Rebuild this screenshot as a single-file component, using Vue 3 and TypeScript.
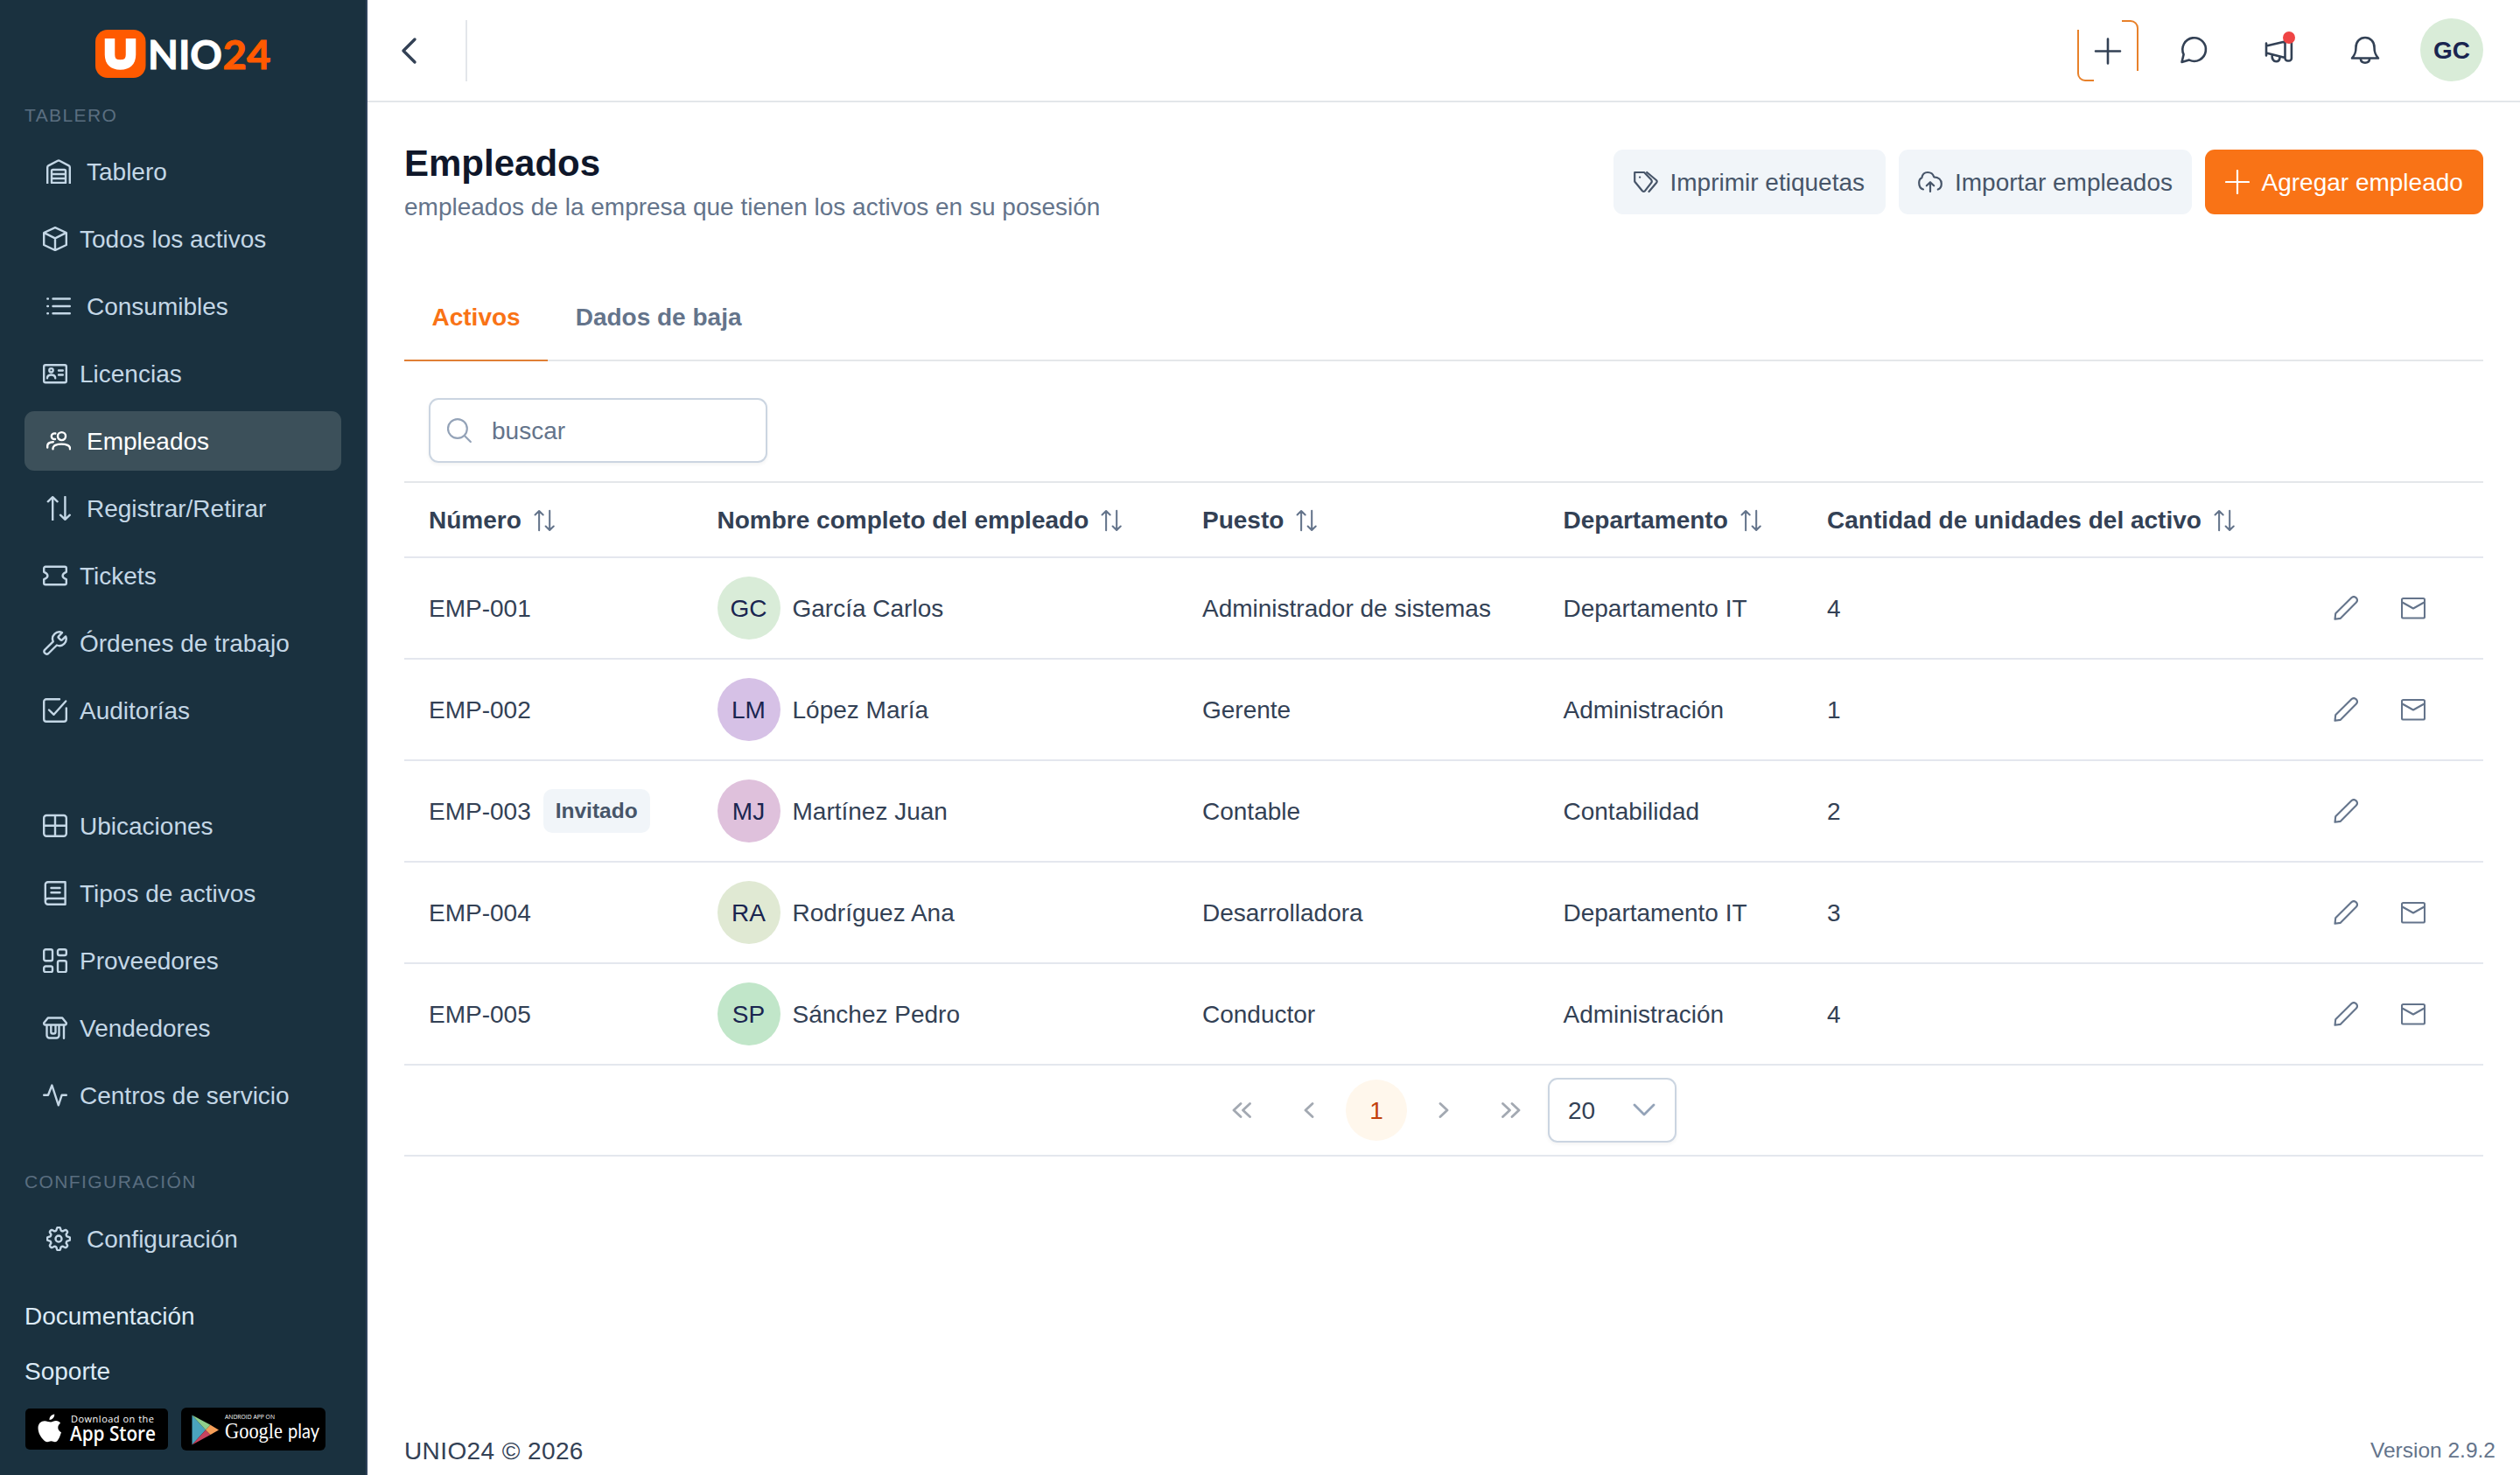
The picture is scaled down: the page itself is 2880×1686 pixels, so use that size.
<script setup lang="ts">
interface MenuItem {
  label: string
  icon: string
  wide?: boolean
  active?: boolean
}

interface Employee {
  code: string
  guest?: boolean
  initials: string
  color: string
  name: string
  role: string
  department: string
  units: number
  mail: boolean
}

// Outline of the settings cog: a circle whose radius swells eight times.
function cogPath(): string {
  const points: string[] = []
  for (let i = 0; i < 96; i++) {
    const a = (i / 96) * Math.PI * 2
    const wave = Math.tanh(2.2 * Math.cos(8 * a)) / Math.tanh(2.2)
    const r = 11.4 + 1.7 * wave
    points.push(`${(14 + r * Math.sin(a)).toFixed(2)} ${(14 - r * Math.cos(a)).toFixed(2)}`)
  }
  return `M${points.join('L')}ZM17.500 14a3.500 3.500 0 1 1-7 0a3.500 3.500 0 0 1 7 0Z`
}

const icons: Record<string, string> = {
  warehouse:
    'M1.2 27.5V9.2Q1.2 8 2.3 7.4L13 1.7Q14 1.2 15 1.7L25.7 7.4Q26.8 8 26.8 9.2V27.5M6 27V13.5a1.5 1.5 0 0 1 1.500-1.500H20.500a1.500 1.500 0 0 1 1.500 1.500V27ZM6 17H22M6 22H22',
  box: 'M14 1.200L26.800 7V21L14 27L1.200 21V7ZM1.500 7.200L14 13.300L26.500 7.200M14 13.300V27',
  list: 'M7.500 5.500H26.800M7.500 14H26.800M7.500 22.300H26.800M1.300 5.500h.6M1.300 14h.6M1.300 22.300h.6',
  idcard:
    'M3 4.200H25a1.800 1.800 0 0 1 1.800 1.800V22.500a1.800 1.800 0 0 1-1.800 1.800H3a1.800 1.800 0 0 1-1.800-1.800V6a1.800 1.800 0 0 1 1.800-1.800ZM11.700 10.300a2.200 2.200 0 1 1-4.400 0a2.200 2.200 0 0 1 4.400 0ZM5 19.200C5 16.500 7 15.500 9.500 15.500S14.200 16.500 14.200 19.200M18 10.500H22.800M18 15.500H22.800',
  users:
    'M22 8.600a4.500 4.500 0 1 1-9 0a4.500 4.500 0 0 1 9 0ZM7.500 23.300V22.300C7.500 19.600 11.500 17.600 17.200 17.600S27 19.600 27 22.300V23.300M10.300 5.500C7.500 5 5.800 6.700 5.800 8.700S7.500 12.300 10 12M1.200 21.500V19.800C1.200 17.200 3.500 15.300 7.800 15.200',
  arrows: 'M7.200 27.300V1.200M1.800 6.300L7.200 1.200L12.600 6.300M21.400 1V26.800M16 21.700L21.400 26.800L26.800 21.700',
  ticket:
    'M1.200 9.800V5.600a1.800 1.800 0 0 1 1.800-1.800H25a1.800 1.800 0 0 1 1.800 1.800V9.800C23.600 11 22.600 12.300 22.600 14S23.600 17 26.800 18.200V22.400a1.800 1.800 0 0 1-1.800 1.800H3a1.800 1.800 0 0 1-1.800-1.800V18.200C4.400 17 5.400 15.700 5.400 14S4.400 11 1.200 9.800Z',
  wrench:
    'M18 6.300a1.400 1.400 0 0 0 0 1.900l2.200 2.200a1.400 1.400 0 0 0 1.900 0l4-4a7.800 7.800 0 0 1-10.200 10.100L6.300 26a3 3 0 0 1-4.200-4.200L11.700 12.300A7.800 7.800 0 0 1 22 2.100Z',
  check:
    'M19 1.200H4a2.800 2.800 0 0 0-2.800 2.800V24a2.800 2.800 0 0 0 2.800 2.800H24a2.800 2.800 0 0 0 2.800-2.800V11.500M7 13.500L12.500 18.800L26.200 3.500',
  grid: 'M4.200 2H23.800a3 3 0 0 1 3 3V22.800a3 3 0 0 1-3 3H4.200a3 3 0 0 1-3-3V5a3 3 0 0 1 3-3ZM14 2V25.800M1.200 13.800H26.800',
  book: 'M25.600 1.200V26.800H5.800a3 3 0 0 1-3-3V4.200a3 3 0 0 1 3-3ZM2.800 23.500C2.800 21.500 4 20 6 20H25.600M9.500 8H19.500M9.500 13.200H19.500',
  tiles:
    'M3.200 1.200H9a2 2 0 0 1 2 2V12.300a2 2 0 0 1-2 2H3.200a2 2 0 0 1-2-2V3.200a2 2 0 0 1 2-2ZM19 1.200H24.800a2 2 0 0 1 2 2V6a2 2 0 0 1-2 2H19a2 2 0 0 1-2-2V3.200a2 2 0 0 1 2-2ZM3.200 20.500H9a2 2 0 0 1 2 2V25.200a2 2 0 0 1-2 2H3.200a2 2 0 0 1-2-2V22.500a2 2 0 0 1 2-2ZM19 14.200H24.800a2 2 0 0 1 2 2V25.200a2 2 0 0 1-2 2H19a2 2 0 0 1-2-2V16.200a2 2 0 0 1 2-2Z',
  shop: 'M5.800 2.500H22.200L26.800 8.300Q27 10.500 25 10.500H3Q1 10.500 1.200 8.300ZM4.500 10.500V22.500a3 3 0 0 0 3 3H15.500a3 3 0 0 0 3-3V10.500M24 10.500V25.800M9.300 11V18.500a2 2 0 0 0 2 2H12.500a2 2 0 0 0 2-2V11',
  activity: 'M1.200 13.800H6L10.400 2.500L17.800 25.300L21.600 13.800H26.800',
  cog: cogPath(),
  tag: 'M1.200 3H12L20.200 11.600Q21.400 13.200 20.200 14.800L13 24.200Q11.500 25.600 10 24.200L1.200 13.500ZM15.200 3L26 12Q27.300 13.400 26 15L17.500 25M7 8.600h.2',
  upload:
    'M6 22.500C2.500 21.500 1.200 18.500 1.200 15C1.200 12 2.500 10 4.300 9.200C5 5.500 7.500 3 11 3C14.500 3 17.300 5 18.200 8.300C23.500 8.500 26.800 11.500 26.800 16C26.800 19 25.500 21.500 22.800 22.500M14 25V14.500M9.800 18.300L14 14.200L18.200 18.300',
  plus: 'M14 1V27M1 14H27',
  pencil: 'M1.500 26.800L2.200 20.300L20.300 2.300Q23 -.2 25.700 2.300Q28.300 5 25.700 7.800L7.600 25.900Z',
  mail: 'M2.500 3H25.500a1.500 1.500 0 0 1 1.500 1.500V24a1.500 1.500 0 0 1-1.500 1.500H2.500a1.500 1.500 0 0 1-1.500-1.500V4.500a1.500 1.500 0 0 1 1.500-1.500ZM1.500 7.500L14 14.500L26.500 7.500',
  search: 'M22.800 12a10.900 10.900 0 1 1-21.800 0a10.900 10.900 0 0 1 21.800 0ZM19.800 20L26.800 27',
  sort: 'M6.400 26V2.300M1.500 7L6.400 2.200L11.300 7M19.400 2V25.600M14.500 21L19.400 25.800L24.300 21',
}

const mainItems: MenuItem[] = [
  { label: 'Tablero', icon: 'warehouse', wide: true },
  { label: 'Todos los activos', icon: 'box' },
  { label: 'Consumibles', icon: 'list', wide: true },
  { label: 'Licencias', icon: 'idcard' },
  { label: 'Empleados', icon: 'users', wide: true, active: true },
  { label: 'Registrar/Retirar', icon: 'arrows', wide: true },
  { label: 'Tickets', icon: 'ticket' },
  { label: 'Órdenes de trabajo', icon: 'wrench' },
  { label: 'Auditorías', icon: 'check' },
]

const catalogItems: MenuItem[] = [
  { label: 'Ubicaciones', icon: 'grid' },
  { label: 'Tipos de activos', icon: 'book' },
  { label: 'Proveedores', icon: 'tiles' },
  { label: 'Vendedores', icon: 'shop' },
  { label: 'Centros de servicio', icon: 'activity' },
]

const settingItems: MenuItem[] = [{ label: 'Configuración', icon: 'cog', wide: true }]

const groups: { key: string; title?: string; items: MenuItem[] }[] = [
  { key: 'main', title: 'TABLERO', items: mainItems },
  { key: 'catalog', items: catalogItems },
  { key: 'settings', title: 'CONFIGURACIÓN', items: settingItems },
]

const columns: string[] = [
  'Número',
  'Nombre completo del empleado',
  'Puesto',
  'Departamento',
  'Cantidad de unidades del activo',
]

const employees: Employee[] = [
  { code: 'EMP-001', initials: 'GC', color: '#d9ecd8', name: 'García Carlos', role: 'Administrador de sistemas', department: 'Departamento IT', units: 4, mail: true },
  { code: 'EMP-002', initials: 'LM', color: '#d6c1e6', name: 'López María', role: 'Gerente', department: 'Administración', units: 1, mail: true },
  { code: 'EMP-003', guest: true, initials: 'MJ', color: '#dfc1dc', name: 'Martínez Juan', role: 'Contable', department: 'Contabilidad', units: 2, mail: false },
  { code: 'EMP-004', initials: 'RA', color: '#e0e9d3', name: 'Rodríguez Ana', role: 'Desarrolladora', department: 'Departamento IT', units: 3, mail: true },
  { code: 'EMP-005', initials: 'SP', color: '#c1e6c9', name: 'Sánchez Pedro', role: 'Conductor', department: 'Administración', units: 4, mail: true },
]
</script>

<template>
  <div class="app">
    <aside class="sidebar">
      <svg class="logo" width="204" height="60" viewBox="0 0 204 60">
        <rect x="1" y="2" width="57.500" height="55" rx="14" fill="#ff5a00" />
        <path d="M17.500 13V31.500Q17.500 43 29.500 43T41.500 31.500V13" fill="none" stroke="#fff" stroke-width="11.500" transform="translate(0 -1)" />
        <text class="logo-text" x="61" y="46.500" fill="#fff" stroke="#fff" textLength="85" lengthAdjust="spacingAndGlyphs">NIO</text>
        <text class="logo-text" x="146.500" y="46.500" fill="#ff5a00" stroke="#ff5a00" textLength="55" lengthAdjust="spacingAndGlyphs">24</text>
      </svg>

      <nav v-for="group in groups" :key="group.key" class="group" :class="group.key">
        <div v-if="group.title" class="group-title">{{ group.title }}</div>
        <a v-for="item in group.items" :key="item.label" class="item" :class="{ wide: item.wide, active: item.active }">
          <svg class="icon" viewBox="0 0 28 28"><path :d="icons[item.icon]" /></svg>
          <span>{{ item.label }}</span>
        </a>
      </nav>

      <div class="links">
        <a>Documentación</a>
        <a>Soporte</a>
      </div>

      <div class="stores">
        <svg width="163" height="47" viewBox="0 0 163 47">
          <rect width="163" height="47" rx="5" fill="#000" />
          <path
            fill="#fff"
            d="M29 15.500C30.500 15.500 32.500 14 35 14C37 14 39 15 40 16.800C36 19.500 36.500 25.300 41 27.200C39.800 31 37.500 38.300 33.800 38.300C32.200 38.300 31.500 37.300 29.500 37.300C27.500 37.300 26.800 38.300 25.200 38.300C21.500 38.300 14.500 30 14.500 22.500C14.500 17 18 14.200 22 14.200C24.800 14.200 27 15.500 29 15.500ZM27.500 13C27.300 9.500 30.200 6.800 33.200 6.500C33.600 10 30.500 13.200 27.500 13Z"
          />
          <text class="badge-sans" x="52" y="15.600" font-size="11" font-weight="500" fill="#fff" textLength="95">Download on the</text>
          <text class="badge-sans" x="51" y="37" font-size="22.500" font-weight="600" fill="#fff" textLength="98" lengthAdjust="spacingAndGlyphs">App Store</text>
        </svg>
        <svg width="165" height="49" viewBox="0 0 165 49">
          <rect width="165" height="49" rx="6" fill="#000" />
          <path d="M12.500 8.500V42.500L28 25.500Z" fill="#4aa3bd" />
          <path d="M12.500 8.500L28 25.500L33.500 19.800Z" fill="#8fcf8b" />
          <path d="M12.500 42.500L28 25.500L33.500 31Z" fill="#c8435f" />
          <path d="M28 25.500L33.500 19.800L43 25.500L33.500 31Z" fill="#f59e58" />
          <text class="badge-sans" x="50" y="13" font-size="7" font-weight="500" fill="#fff" textLength="57" lengthAdjust="spacingAndGlyphs">ANDROID APP ON</text>
          <text class="badge-serif" x="50" y="34.500" font-size="26" fill="#fff" textLength="66" lengthAdjust="spacingAndGlyphs">Google</text>
          <text class="badge-play" x="122" y="34.500" font-size="22.500" fill="#fff" textLength="36" lengthAdjust="spacingAndGlyphs">play</text>
        </svg>
      </div>
    </aside>

    <div class="content">
      <header class="topbar">
        <svg class="back" width="20" height="32" viewBox="0 0 20 32"><path d="M17 3L4 16L17 29" /></svg>
        <span class="divider"></span>
        <div class="tools">
          <svg class="quick" width="70" height="70" viewBox="0 0 70 70">
            <path class="frame" d="M1 11V61a8 8 0 0 0 8 8H19M51 1H61a8 8 0 0 1 8 8V58" />
            <path d="M35 21.500V49.500M21 35.500H49" />
          </svg>
          <svg class="tool chat" viewBox="0 0 32 32">
            <path d="M2.500 30L4.600 21.200A13.300 13.300 0 1 1 11 27.600Z" />
          </svg>
          <div class="tool mega">
            <svg viewBox="0 0 34 32">
              <path d="M2 8.500V22.500M2 11.500L23.500 6.500V25L2 19.500M23.500 6.500a3.700 3.700 0 0 1 7.400 0V25.500a3 3 0 0 1-3 3H26.500a3 3 0 0 1-3-3ZM8.500 21.800C8.500 26 10 29.200 13.300 29.200C16 29.200 17.500 27 17.500 24.200" />
            </svg>
            <span class="dot"></span>
          </div>
          <svg class="tool bell" viewBox="0 0 34 32">
            <path d="M2 25.500C5.500 21.500 6.500 19 6.500 13C6.500 6.500 11 2 17 2S27.500 6.500 27.500 13C27.500 19 28.500 21.500 32 25.500ZM11.800 26C12 29 14 30.700 17 30.700S22 29 22.200 26" />
          </svg>
          <span class="avatar me">GC</span>
        </div>
      </header>

      <main class="page">
        <div class="heading">
          <div class="titles">
            <h1>Empleados</h1>
            <p>empleados de la empresa que tienen los activos en su posesión</p>
          </div>
          <div class="buttons">
            <button class="btn labels"><svg class="icon" viewBox="0 0 28 28"><path :d="icons.tag" /></svg><span>Imprimir etiquetas</span></button>
            <button class="btn import"><svg class="icon" viewBox="0 0 28 28"><path :d="icons.upload" /></svg><span>Importar empleados</span></button>
            <button class="btn primary"><svg class="icon" viewBox="0 0 28 28"><path :d="icons.plus" /></svg><span>Agregar empleado</span></button>
          </div>
        </div>

        <div class="tabs">
          <span class="tab current">Activos</span>
          <span class="tab">Dados de baja</span>
        </div>

        <div class="search-row">
          <div class="search">
            <svg class="icon" viewBox="0 0 28 28"><path :d="icons.search" /></svg>
            <span>buscar</span>
          </div>
        </div>

        <div class="row head">
          <div v-for="col in columns" :key="col" class="cell">
            {{ col }}
            <svg class="sort" viewBox="0 0 26 28"><path :d="icons.sort" /></svg>
          </div>
        </div>
        <div v-for="e in employees" :key="e.code" class="row body">
          <div class="cell">
            {{ e.code }}
            <span v-if="e.guest" class="guest">Invitado</span>
          </div>
          <div class="cell">
            <span class="avatar" :style="{ background: e.color }">{{ e.initials }}</span>
            {{ e.name }}
          </div>
          <div class="cell">{{ e.role }}</div>
          <div class="cell">{{ e.department }}</div>
          <div class="cell">{{ e.units }}</div>
          <div class="actions">
            <span class="action"><svg class="icon" viewBox="0 0 28 28"><path :d="icons.pencil" /></svg></span>
            <span v-if="e.mail" class="action"><svg class="icon" viewBox="0 0 28 28"><path :d="icons.mail" /></svg></span>
          </div>
        </div>

        <div class="pager">
          <span class="page-btn"><svg width="24" height="20" viewBox="0 0 24 20"><path d="M11 2.500L3 10L11 17.500M21.500 2.500L13.500 10L21.500 17.500" /></svg></span>
          <span class="page-btn"><svg width="24" height="20" viewBox="0 0 24 20"><path d="M16 2.500L8 10L16 17.500" /></svg></span>
          <span class="page-btn selected">1</span>
          <span class="page-btn"><svg width="24" height="20" viewBox="0 0 24 20"><path d="M8 2.500L16 10L8 17.500" /></svg></span>
          <span class="page-btn"><svg width="24" height="20" viewBox="0 0 24 20"><path d="M2.500 2.500L10.500 10L2.500 17.500M13 2.500L21 10L13 17.500" /></svg></span>
          <span class="select">
            <span>20</span>
            <svg width="26" height="18" viewBox="0 0 26 18"><path d="M2 3L13 14L24 3" /></svg>
          </span>
        </div>
      </main>

      <footer class="footer">
        <span class="copyright">UNIO24 © 2026</span>
        <span class="version">Version 2.9.2</span>
      </footer>
    </div>
  </div>
</template>

<style>
body {
  background: #fff;
}
</style>

<style scoped>
.app {
  display: flex;
  width: 2880px;
  height: 1686px;
  overflow: hidden;
  font-family: "Liberation Sans", Arial, sans-serif;
  font-size: 28px;
  line-height: 32px;
  color: #334155;
  background: #fff;
}

.app *,
.app {
  box-sizing: border-box;
}

svg {
  display: block;
  flex: none;
}

.icon {
  width: 28px;
  height: 28px;
  fill: none;
  stroke: currentColor;
  stroke-width: 2.200;
  stroke-linecap: round;
  stroke-linejoin: round;
}

/* sidebar */
.sidebar {
  display: flex;
  flex-direction: column;
  flex: none;
  width: 420px;
  padding: 32px 28px 0;
  background: #1a313f;
  border-right: 2px solid #2f425b;
}

.logo {
  margin-left: 80px;
}

.logo-text {
  font-family: Lato, "Open Sans", sans-serif;
  font-size: 46px;
  font-weight: 700;
  stroke-width: 1;
}

.group {
  display: flex;
  flex-direction: column;
  gap: 9px;
}

.main {
  margin-top: 26px;
}

.catalog {
  margin-top: 64px;
}

.settings {
  margin-top: 51px;
}

.group-title {
  height: 35px;
  line-height: 28px;
  font-size: 21px;
  letter-spacing: 1.400px;
  color: #5a6e80;
}

.settings .group-title {
  height: 36px;
}

.item {
  display: flex;
  align-items: center;
  gap: 14px;
  height: 68px;
  padding-left: 21px;
  border-radius: 11px;
  color: #c4d7e6;
  white-space: nowrap;
}

.item .icon {
  stroke-width: 2.400;
}

.item span,
.btn span,
.search span,
.select span {
  padding-top: 2px;
}

.item.wide {
  gap: 18.500px;
  padding-left: 24.500px;
}

.item.active {
  color: #fff;
  background: #3c505a;
}

.links {
  display: flex;
  flex-direction: column;
  gap: 31px;
  margin-top: 39px;
  color: #dceaf6;
}

.stores {
  display: flex;
  align-items: center;
  gap: 15px;
  margin: 25px 0 0 1px;
}

.badge-sans {
  font-family: "Open Sans", "Noto Sans", sans-serif;
}

.badge-serif {
  font-family: "Liberation Serif", serif;
}

.badge-play {
  font-family: Lato, sans-serif;
}

/* top bar */
.content {
  display: flex;
  flex-direction: column;
  flex: 1;
  min-width: 0;
}

.topbar {
  display: flex;
  align-items: center;
  height: 117px;
  padding: 0 42px 1px 37px;
  border-bottom: 2px solid #e3e6ea;
}

.topbar svg {
  fill: none;
  stroke: #334155;
  stroke-width: 2.600;
  stroke-linecap: round;
  stroke-linejoin: round;
}

.topbar .back {
  margin-top: 2px;
  stroke-width: 3.400;
}

.divider {
  width: 2px;
  height: 70px;
  margin: 1px 0 0 55px;
  background: #e3e6ea;
}

.tools {
  display: flex;
  align-items: center;
  margin-left: auto;
}

.quick {
  margin-top: 1px;
}

.quick .frame {
  stroke: #e8812a;
  stroke-width: 2;
  stroke-linecap: butt;
}

.tool {
  width: 34px;
  height: 32px;
}

.chat {
  margin-left: 46px;
}

.mega {
  position: relative;
  margin-left: 64px;
}

.mega svg {
  width: 34px;
  height: 32px;
}

.dot {
  position: absolute;
  top: -5px;
  right: -1px;
  width: 14px;
  height: 14px;
  border-radius: 50%;
  background: #ef4444;
}

.bell {
  margin-left: 64px;
}

.avatar {
  display: flex;
  align-items: center;
  justify-content: center;
  flex: none;
  width: 72px;
  height: 72px;
  padding-top: 2px;
  border-radius: 50%;
  color: #1a2550;
}

.me {
  margin-left: 46px;
  padding-top: 1px;
  font-weight: 700;
  background: #d9ecd8;
}

/* page */
.page {
  display: flex;
  flex-direction: column;
  flex: 1;
  padding: 0 42px;
}

.heading {
  display: flex;
  justify-content: space-between;
  height: 222px;
}

h1 {
  margin: 46px 0 0;
  font-size: 42px;
  line-height: 48px;
  font-weight: 700;
  color: #0f172a;
}

p {
  margin: 10px 0 0;
  color: #64748b;
}

.buttons {
  display: flex;
  gap: 15px;
  margin-top: 54px;
}

.btn {
  display: flex;
  align-items: center;
  gap: 14px;
  height: 74px;
  padding: 0 0 0 22.500px;
  border: 0;
  border-radius: 11px;
  font: inherit;
  color: #475569;
  background: #f1f5f9;
  white-space: nowrap;
}

.labels {
  width: 310.500px;
}

.import {
  width: 335.500px;
}

.primary {
  width: 318px;
  color: #fff;
  background: #f97316;
}

.tabs {
  display: flex;
  height: 74px;
  border-bottom: 2px solid #e4e7ea;
}

.tab {
  height: 74px;
  padding: 8px 31.500px 0;
  font-weight: 700;
  color: #64748b;
}

.tab.current {
  color: #f97316;
  border-bottom: 2px solid #e07f35;
}

.search-row {
  height: 139px;
  padding: 42px 28px 0;
  border-bottom: 2px solid #e4e7ea;
}

.search {
  display: flex;
  align-items: center;
  gap: 23px;
  width: 387px;
  height: 74px;
  padding-left: 19px;
  border: 2px solid #cbd5e1;
  border-radius: 11px;
  box-shadow: 0 2px 4px rgba(18, 18, 23, 0.05);
  color: #64748b;
}

.search .icon {
  stroke: #94a3b8;
}

.row {
  display: grid;
  grid-template-columns: 329.500px 554.500px 412.500px 301.500px 589.500px 188.500px;
  align-items: center;
  border-bottom: 2px solid #e4e7ee;
}

.head {
  height: 86px;
  font-weight: 700;
}

.body {
  height: 116px;
}

.cell {
  display: flex;
  align-items: center;
  gap: 14px;
  padding: 2px 0 0 28px;
  white-space: nowrap;
}

.cell .avatar,
.guest {
  margin-top: -2px;
}

.sort {
  width: 24.500px;
  height: 26px;
  fill: none;
  stroke: #64748b;
  stroke-width: 2.200;
  stroke-linecap: round;
  stroke-linejoin: round;
}

.guest {
  height: 50px;
  padding: 0 14px;
  border-radius: 10px;
  line-height: 49px;
  font-size: 24.500px;
  font-weight: 700;
  color: #475569;
  background: #f1f5f9;
}

.actions {
  display: flex;
  gap: 14px;
}

.action {
  display: flex;
  justify-content: center;
  width: 63px;
  color: #64748b;
}

.action .icon {
  stroke-width: 2.100;
}

.pager {
  display: flex;
  align-items: center;
  justify-content: center;
  gap: 7px;
  height: 104px;
  border-bottom: 2px solid #e4e7ee;
}

.pager svg {
  fill: none;
  stroke: #a3a9b2;
  stroke-width: 2.800;
  stroke-linecap: round;
  stroke-linejoin: round;
}

.page-btn {
  display: flex;
  align-items: center;
  justify-content: center;
  width: 70px;
  height: 70px;
  border-radius: 50%;
}

.selected {
  padding-top: 2px;
  color: #c2410c;
  background: #fff7ec;
}

.select {
  display: flex;
  align-items: center;
  justify-content: space-between;
  width: 147px;
  height: 74px;
  padding: 0 22px 0 21px;
  border: 2px solid #cbd5e1;
  border-radius: 11px;
  box-shadow: 0 2px 4px rgba(18, 18, 23, 0.05);
}

.pager .select svg {
  stroke: #94a3b8;
}

.footer {
  display: flex;
  align-items: center;
  justify-content: space-between;
  height: 56px;
  padding: 0 28px 0 42px;
}

.copyright {
  padding-top: 2px;
  letter-spacing: 0.400px;
}

.version {
  font-size: 24.500px;
  color: #64748b;
}
</style>
